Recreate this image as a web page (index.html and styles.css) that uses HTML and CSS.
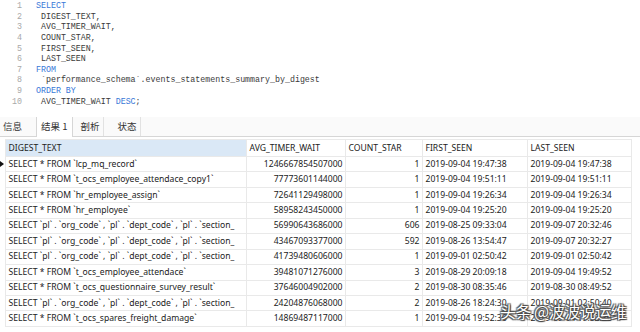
FILE: index.html
```html
<!DOCTYPE html>
<html>
<head>
<meta charset="utf-8">
<link rel="stylesheet" href="styles.css">
</head>
<body>
<div class="editor">
  <div class="line"><span class="ln">1</span><span class="code"><span class="kw">SELECT</span></span></div>
  <div class="line"><span class="ln">2</span><span class="code"> DIGEST_TEXT,</span></div>
  <div class="line"><span class="ln">3</span><span class="code"> AVG_TIMER_WAIT,</span></div>
  <div class="line"><span class="ln">4</span><span class="code"> COUNT_STAR,</span></div>
  <div class="line"><span class="ln">5</span><span class="code"> FIRST_SEEN,</span></div>
  <div class="line"><span class="ln">6</span><span class="code"> LAST_SEEN</span></div>
  <div class="line"><span class="ln">7</span><span class="code"><span class="kw">FROM</span></span></div>
  <div class="line"><span class="ln">8</span><span class="code"> `performance_schema`.events_statements_summary_by_digest</span></div>
  <div class="line"><span class="ln">9</span><span class="code"><span class="kw">ORDER BY</span></span></div>
  <div class="line"><span class="ln">10</span><span class="code"> AVG_TIMER_WAIT <span class="kw">DESC</span>;</span></div>
</div>
<div class="tabs">
  <div class="tab">信息</div>
  <div class="tab active">结果 1</div>
  <div class="tab">剖析</div>
  <div class="tab">状态</div>
</div>
<div class="grid">
  <table>
    <colgroup>
      <col class="c-ind"><col class="c-digest"><col class="c-avg"><col class="c-count"><col class="c-first"><col class="c-last">
    </colgroup>
    <thead>
      <tr><th class="ind"></th><th class="sorted">DIGEST_TEXT</th><th>AVG_TIMER_WAIT</th><th>COUNT_STAR</th><th>FIRST_SEEN</th><th>LAST_SEEN</th></tr>
    </thead>
    <tbody>
      <tr><td class="ind"><span class="arrow"></span></td><td>SELECT * FROM `lcp_mq_record`</td><td class="num">1246667854507000</td><td class="num">1</td><td>2019-09-04 19:47:38</td><td>2019-09-04 19:47:38</td></tr>
      <tr><td class="ind"></td><td>SELECT * FROM `t_ocs_employee_attendace_copy1`</td><td class="num">77773601144000</td><td class="num">1</td><td>2019-09-04 19:51:11</td><td>2019-09-04 19:51:11</td></tr>
      <tr><td class="ind"></td><td>SELECT * FROM `hr_employee_assign`</td><td class="num">72641129498000</td><td class="num">1</td><td>2019-09-04 19:26:34</td><td>2019-09-04 19:26:34</td></tr>
      <tr><td class="ind"></td><td>SELECT * FROM `hr_employee`</td><td class="num">58958243450000</td><td class="num">1</td><td>2019-09-04 19:25:20</td><td>2019-09-04 19:25:20</td></tr>
      <tr><td class="ind"></td><td>SELECT `pl` . `org_code` , `pl` . `dept_code` , `pl` . `section_</td><td class="num">56990643686000</td><td class="num">606</td><td>2019-08-25 09:33:04</td><td>2019-09-07 20:32:46</td></tr>
      <tr><td class="ind"></td><td>SELECT `pl` . `org_code` , `pl` . `dept_code` , `pl` . `section_</td><td class="num">43467093377000</td><td class="num">592</td><td>2019-08-26 13:54:47</td><td>2019-09-07 20:32:27</td></tr>
      <tr><td class="ind"></td><td>SELECT `pl` . `org_code` , `pl` . `dept_code` , `pl` . `section_</td><td class="num">41739480606000</td><td class="num">1</td><td>2019-09-01 02:50:42</td><td>2019-09-01 02:50:42</td></tr>
      <tr><td class="ind"></td><td>SELECT * FROM `t_ocs_employee_attendace`</td><td class="num">39481071276000</td><td class="num">3</td><td>2019-08-29 20:09:18</td><td>2019-09-04 19:49:52</td></tr>
      <tr><td class="ind"></td><td>SELECT * FROM `t_ocs_questionnaire_survey_result`</td><td class="num">37646004902000</td><td class="num">2</td><td>2019-08-30 08:35:46</td><td>2019-08-30 08:49:52</td></tr>
      <tr><td class="ind"></td><td>SELECT `pl` . `org_code` , `pl` . `dept_code` , `pl` . `section_</td><td class="num">24204876068000</td><td class="num">2</td><td>2019-08-26 18:24:30</td><td>2019-09-01 02:50:40</td></tr>
      <tr><td class="ind"></td><td>SELECT * FROM `t_ocs_spares_freight_damage`</td><td class="num">14869487117000</td><td class="num">1</td><td>2019-09-04 19:52:36</td><td>2019-09-04 19:52:36</td></tr>
    </tbody>
  </table>
  <div class="watermark">头条 @波波说运维</div>
</div>
</body>
</html>
```
FILE: styles.css
```css
html, body {
  margin: 0;
  padding: 0;
  background: #ffffff;
  width: 640px;
  height: 332px;
  overflow: hidden;
}

.editor {
  padding-top: 1px;
  height: 114px;
  box-sizing: border-box;
  font-family: "Liberation Mono", "DejaVu Sans Mono", monospace;
  font-size: 8.3px;
  color: #3a3a3a;
}

.line {
  display: flex;
  height: 10.65px;
  line-height: 10.65px;
  white-space: pre;
}

.ln {
  width: 22px;
  text-align: right;
  color: #a8a8a8;
  flex: none;
}

.code {
  padding-left: 14px;
}

.kw {
  color: #3878d8;
}

.tabs {
  display: flex;
  height: 20px;
  margin-top: 3px;
  border-bottom: 1px solid #d6d6d6;
  background: #fafafa;
  font-family: "Noto Sans CJK SC", "Noto Sans", sans-serif;
  font-size: 9.5px;
  color: #333;
  box-sizing: border-box;
}

.tab {
  padding: 0 4px;
  line-height: 19px;
  border-right: 1px solid #e2e2e2;
  margin-right: 9px;
}

.tab:first-child {
  padding-left: 3px;
  margin-right: 10px;
  border-right: none;
}

.tab.active {
  background: #ffffff;
  border-left: 1px solid #d6d6d6;
  border-right: 1px solid #d6d6d6;
  padding: 0 5px 0 4px;
  margin-bottom: -1px;
  margin-right: 3px;
  height: 20px;
}

.grid {
  position: relative;
  padding-top: 2px;
}

table {
  border-collapse: collapse;
  table-layout: fixed;
  width: 631px;
  font-family: "Noto Sans", "Noto Sans CJK SC", sans-serif;
  font-size: 8.6px;
  color: #222;
}

.c-ind { width: 5px; }
.c-digest { width: 241px; }
.c-avg { width: 99px; }
.c-count { width: 77px; }
.c-first { width: 105px; }
.c-last { width: 104px; }

th, td {
  height: 15.45px;
  padding: 0 0 0 3px;
  border: 1px solid #e9e9e9;
  white-space: nowrap;
  overflow: hidden;
  text-align: left;
  font-weight: normal;
  box-sizing: border-box;
  line-height: 13px;
}

th {
  background: #ffffff;
  height: 17px;
}

th.sorted {
  background: #dae8f6;
}

th.ind, td.ind {
  padding: 0;
  border-left: none;
  border-top: none;
  border-bottom: none;
  background: #ffffff;
  position: relative;
}

td.num {
  text-align: right;
  padding: 0 2px 0 0;
}

.arrow {
  position: absolute;
  left: 0;
  top: 4px;
  width: 0;
  height: 0;
  border-top: 3.5px solid transparent;
  border-bottom: 3.5px solid transparent;
  border-left: 4px solid #111;
}

.watermark {
  position: absolute;
  left: 500px;
  top: 165px;
  font-family: "Noto Sans CJK SC", sans-serif;
  font-size: 16px;
  line-height: 18px;
  color: #ffffff;
  letter-spacing: -0.5px;
  text-shadow: 0 0 1px #333, 1px 1px 1px #444, -1px -1px 1px #555, 1px -1px 1px #555, -1px 1px 1px #555;
}
```
